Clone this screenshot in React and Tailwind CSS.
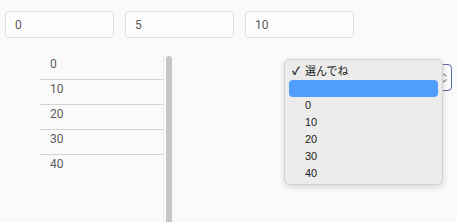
import React from "react";

const inputs = ["0", "5", "10"];
const rows = ["0", "10", "20", "30", "40"];
const opts = ["0", "10", "20", "30", "40"];

export default function App() {
  return (
    <div
      className="relative w-[457px] h-[222px] overflow-hidden bg-[#fafafa] text-[#444]"
      style={{ fontFamily: "Roboto, 'Noto Sans CJK JP', sans-serif" }}
    >
      <div className="flex gap-[11px] pl-[5px] pt-[11px]">
        {inputs.map((v) => (
          <div
            key={v}
            className="w-[109px] h-[27px] rounded-[4px] border border-[#dedede] bg-[#fdfdfd] pl-[9px] flex items-center text-[12px] text-[#5a5a5a]"
          >
            {v}
          </div>
        ))}
      </div>

      <div className="flex mt-[16px] pl-[40px]">
        <div className="flex h-[200px]">
          <div className="w-[123px] pt-[1px]">
            {rows.map((r, i) => (
              <div
                key={r}
                className={
                  "h-[25px] pl-[10px] text-[12px] leading-[18px] text-[#5a5a5a] " +
                  (i < rows.length - 1 ? "border-b border-[#d4d4d4]" : "")
                }
              >
                {r}
              </div>
            ))}
          </div>
          <div className="w-[12px] border-l border-[#ebebeb] bg-[#f9f9f9] pt-[2px] pl-[2px]">
            <div className="w-[6px] h-[200px] rounded-t-[3px] bg-[#c6c6c6]" />
          </div>
        </div>
      </div>

      {/* select box */}
      <div className="absolute left-[330px] top-[64px] w-[122px] h-[27px] rounded-[4px] border border-[#5a6aa8] bg-[#fbfbfb] flex items-center justify-end pr-[3px]">
        <svg width="8" height="12" viewBox="0 0 8 12">
          <path d="M1.5 4.5 L4 2 L6.5 4.5" fill="none" stroke="#9a9a9a" strokeWidth="1.2" />
          <path d="M1.5 7.5 L4 10 L6.5 7.5" fill="none" stroke="#9a9a9a" strokeWidth="1.2" />
        </svg>
      </div>

      {/* dropdown popup */}
      <div
        className="absolute left-[284px] top-[59px] w-[159px] h-[126px] rounded-[6px] border border-[#d2d2d2] bg-[#ececec] shadow-[0_2px_6px_rgba(0,0,0,0.15)] pt-[3px] px-[4px] text-[11px] text-[#222]"
        style={{ fontFamily: "'Liberation Sans', 'Noto Sans CJK JP', sans-serif" }}
      >
        <div className="h-[17px] flex items-center pl-[3px]">
          <span className="w-[13px] text-[11px] font-bold">✓</span>
          <span>選んでね</span>
        </div>
        <div className="h-[17px] rounded-[4px] bg-[#519dfd]" />
        {opts.map((o) => (
          <div key={o} className="h-[17px] flex items-center pl-[16px]">
            {o}
          </div>
        ))}
      </div>
    </div>
  );
}
